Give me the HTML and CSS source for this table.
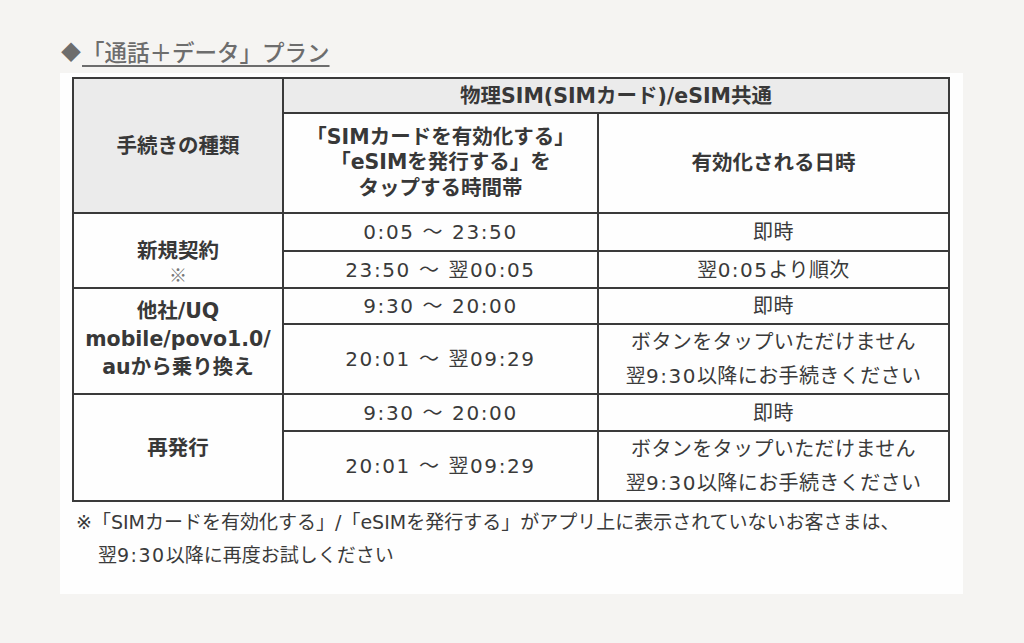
FILE: index.html
```html
<!DOCTYPE html>
<html lang="ja">
<head>
<meta charset="utf-8">
<link rel="stylesheet" href="styles.css">
</head>
<body>
<h2 class="title"><span class="diamond">◆</span><span class="title-text">「通話＋データ」プラン</span></h2>
<div class="panel">
  <table class="sched">
    <colgroup>
      <col class="c1"><col class="c2"><col class="c3">
    </colgroup>
    <tr class="h1">
      <th rowspan="2" class="gray">手続きの種類</th>
      <th colspan="2" class="gray">物理SIM(SIMカード)/eSIM共通</th>
    </tr>
    <tr class="h2">
      <th class="hl">「SIMカードを有効化する」<br>「eSIMを発行する」を<br>タップする時間帯</th>
      <th>有効化される日時</th>
    </tr>
    <tr class="r38">
      <th rowspan="2" class="kind k1">新規契約<br><span class="mark">※</span></th>
      <td class="dot time">0:05 ～ 23:50</td>
      <td class="dot">即時</td>
    </tr>
    <tr class="r37">
      <td class="time">23:50 ～ 翌00:05</td>
      <td>翌<span class="n">0:05</span>より順次</td>
    </tr>
    <tr class="r36">
      <th rowspan="2" class="kind k2">他社/UQ<br>mobile/povo1.0/<br>auから乗り換え</th>
      <td class="dot time">9:30 ～ 20:00</td>
      <td class="dot">即時</td>
    </tr>
    <tr class="r70">
      <td class="time">20:01 ～ 翌09:29</td>
      <td class="two">ボタンをタップいただけません<br>翌<span class="n">9:30</span>以降にお手続きください</td>
    </tr>
    <tr class="r37">
      <th rowspan="2" class="kind">再発行</th>
      <td class="time">9:30 ～ 20:00</td>
      <td>即時</td>
    </tr>
    <tr class="r70">
      <td class="time">20:01 ～ 翌09:29</td>
      <td class="two">ボタンをタップいただけません<br>翌<span class="n">9:30</span>以降にお手続きください</td>
    </tr>
  </table>
  <p class="note">※「SIMカードを有効化する」/「eSIMを発行する」がアプリ上に表示されていないお客さまは、<br>翌<span class="n">9:30</span>以降に再度お試しください</p>
</div>
</body>
</html>
```

FILE: styles.css
```css
html, body {
  margin: 0;
  padding: 0;
}
body {
  background: #f5f4f2;
  font-family: "Noto Sans CJK JP", "Noto Sans", sans-serif;
  color: #363636;
  width: 1024px;
  height: 643px;
  overflow: hidden;
}
.title {
  margin: 0;
  padding: 36px 0 0 61px;
  height: 37px;
  box-sizing: content-box;
  font-size: 22.5px;
  line-height: 30px;
  font-weight: 500;
  color: #6d6d6d;
}
.diamond {
  font-size: 20px;
  vertical-align: 1px;
  margin-right: 1px;
}
.title-text {
  text-decoration: underline;
  text-decoration-thickness: 2px;
  text-underline-offset: 4px;
}
.panel {
  margin-left: 60px;
  width: 903px;
  height: 521px;
  background: #fefefe;
  padding: 4px 0 0 12px;
  box-sizing: border-box;
}
.sched {
  border-collapse: collapse;
  table-layout: fixed;
  width: 876px;
  font-family: "DejaVu Sans", "Noto Sans CJK JP", sans-serif;
  font-size: 20px;
}
.c1 { width: 210px; }
.c2 { width: 315px; }
.c3 { width: 351px; }
.sched th, .sched td {
  border: 2px solid #3a3a3a;
  text-align: center;
  vertical-align: middle;
  padding: 0;
  line-height: 26px;
}
.sched th {
  font-weight: 700;
  font-size: 20.5px;
  color: #383838;
}
.sched td {
  font-weight: 400;
  color: #3a3a3a;
  letter-spacing: 0.4px;
}
.sched td.time {
  letter-spacing: 1.6px;
}
.n {
  letter-spacing: 1.5px;
}
.gray { background: #ebebeb; }
.h1 { height: 35px; }
.h2 { height: 100px; }
.sched .hl { line-height: 25.5px; }
.r38 { height: 38px; }
.r37 { height: 37px; }
.r36 { height: 36px; }
.r70 { height: 70px; }
.sched td.dot {
  border-bottom: 1px dotted #555;
}
.sched .k1 { line-height: 23px; padding-top: 26px; }
.sched .k2 { line-height: 28px; padding-bottom: 4px; }
.mark {
  font-family: "Noto Sans CJK JP", sans-serif;
  font-weight: 400;
  color: #777;
  font-size: 18px;
}
.sched .two { line-height: 34px; }
.note {
  margin: 4px 0 0 4px;
  padding-left: 22px;
  text-indent: -22px;
  font-family: "DejaVu Sans", "Noto Sans CJK JP", sans-serif;
  font-size: 19px;
  line-height: 33px;
  color: #3a3a3a;
}
```
